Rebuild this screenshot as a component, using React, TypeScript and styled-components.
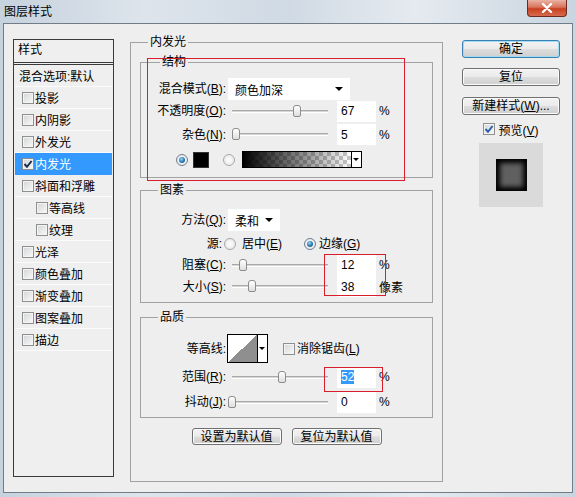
import styled, { createGlobalStyle } from "styled-components";

const GlobalStyle = createGlobalStyle`
  * { box-sizing: border-box; }
  html, body { margin: 0; padding: 0; }
  body {
    font-family: "Liberation Sans", "Noto Sans CJK SC", sans-serif;
    font-size: 12px;
    color: #000;
  }
`;

const CJK = `"Liberation Sans", "Noto Sans CJK SC", sans-serif`;

const Window = styled.div`
  width: 576px;
  height: 497px;
  display: flex;
  flex-direction: column;
  overflow: hidden;
  background: linear-gradient(
    90deg,
    #c6d2de 0%,
    #dde4ec 25%,
    #d0dae4 50%,
    #e5eaf0 72%,
    #c9d5e0 100%
  );
`;

const TitleBar = styled.div`
  height: 23px;
  flex-shrink: 0;
  display: flex;
  align-items: flex-start;
  padding-left: 4px;
`;

const Title = styled.div`
  font-family: ${CJK};
  font-size: 12px;
  line-height: 14px;
  margin-top: 5px;
`;

const CloseButton = styled.div`
  margin-left: auto;
  margin-right: 9px;
  width: 40px;
  height: 17px;
  border: 1px solid #6d2a1e;
  border-top: none;
  border-radius: 0 0 4px 4px;
  background: linear-gradient(#eab3a4 0%, #d9725a 45%, #c7401f 55%, #d76b4f 100%);
  display: flex;
  align-items: center;
  justify-content: center;
`;

const Client = styled.div`
  flex: 1;
  margin: 0 3px 4px;
  border: 1px solid #707c88;
  background: #eeeeee;
  display: flex;
  align-items: flex-start;
  position: relative;
`;

/* ---------- left style list ---------- */

const StyleList = styled.div`
  width: 101px;
  height: 438px;
  margin: 15px 0 0 9px;
  border: 1px solid #3a3a3a;
  background: #efefef;
  font-family: ${CJK};
`;

const ListHeader = styled.div`
  height: 25px;
  padding: 3px 0 0 4px;
  line-height: 15px;
  border-bottom: 3px double #3a3a3a;
`;

const ListItem = styled.div<{ $indent?: number; $selected?: boolean }>`
  height: 22px;
  display: flex;
  align-items: center;
  gap: 1px;
  padding-left: ${(p) => p.$indent ?? 7}px;
  margin: 0 1px;
  border-bottom: 1px solid ${(p) => (p.$selected ? "#3399ff" : "#fbfbfb")};
  background: ${(p) => (p.$selected ? "#3399ff" : "transparent")};
  color: ${(p) => (p.$selected ? "#fff" : "#000")};
  white-space: nowrap;
`;

/* ---------- common controls ---------- */

const CheckBox = styled.span<{ $ml?: number }>`
  width: 12px;
  height: 12px;
  flex-shrink: 0;
  margin-left: ${(p) => p.$ml ?? 0}px;
  border: 1px solid #8e8f8f;
  background: linear-gradient(135deg, #d3d5d8 0%, #f9f9f9 100%);
  box-shadow: inset 0 0 0 1px #f4f4f4;
  display: flex;
  align-items: center;
  justify-content: center;
`;

const Check = ({ on, ml, color = "#1e3a5c" }: { on?: boolean; ml?: number; color?: string }) => (
  <CheckBox $ml={ml}>
    {on && (
      <svg width="10" height="10" viewBox="0 0 10 10">
        <path d="M1.5 5 L4 7.8 L8.6 2" fill="none" stroke={color} strokeWidth="2" />
      </svg>
    )}
  </CheckBox>
);

const Radio = styled.span<{ $on?: boolean; $ml?: number }>`
  width: 12px;
  height: 12px;
  flex-shrink: 0;
  margin-left: ${(p) => p.$ml ?? 0}px;
  border-radius: 50%;
  border: 1px solid ${(p) => (p.$on ? "#6d7f92" : "#a8a8a8")};
  background: radial-gradient(circle at 50% 50%, #ffffff 0%, #e2e2e2 100%);
  position: relative;

  &::after {
    content: "";
    display: ${(p) => (p.$on ? "block" : "none")};
    position: absolute;
    left: 2px;
    top: 2px;
    width: 6px;
    height: 6px;
    border-radius: 50%;
    background: radial-gradient(circle at 40% 35%, #9fd6f5 0%, #2d7fb8 50%, #114a78 100%);
  }
`;

const Key = styled.span`
  text-decoration: underline;
`;

const Text = styled.span<{ $ml?: number }>`
  margin-left: ${(p) => p.$ml ?? 0}px;
  font-family: ${CJK};
  white-space: nowrap;
  line-height: 14px;
`;

/* ---------- group boxes ---------- */

const Group = styled.fieldset<{ $pad: string; $mt?: number; $h?: number }>`
  margin: ${(p) => p.$mt ?? 0}px 0 0;
  padding: ${(p) => p.$pad};
  border: 1px solid #a2a2a2;
  min-width: 0;
  height: ${(p) => (p.$h ? `${p.$h}px` : "auto")};
`;

const Legend = styled.legend<{ $offset: number }>`
  margin-left: ${(p) => p.$offset}px;
  padding: 0 2px;
  height: 14px;
  line-height: 14px;
  font-family: ${CJK};
  font-size: 12px;
`;

const Row = styled.div<{ $h: number; $pl?: number }>`
  height: ${(p) => p.$h}px;
  display: flex;
  align-items: center;
  padding-left: ${(p) => p.$pl ?? 0}px;
`;

const Label = styled.span<{ $w?: number }>`
  width: ${(p) => p.$w ?? 76}px;
  flex-shrink: 0;
  text-align: right;
  white-space: nowrap;
  line-height: 14px;
  font-family: ${CJK};
`;

const Select = styled.div<{ $w: number }>`
  width: ${(p) => p.$w}px;
  height: 22px;
  margin-left: 2px;
  background: #fff;
  display: flex;
  align-items: center;
  padding-left: 7px;
  font-family: ${CJK};
  position: relative;

  &::after {
    content: "";
    position: absolute;
    right: 7px;
    top: 9px;
    border-left: 4px solid transparent;
    border-right: 4px solid transparent;
    border-top: 4px solid #000;
  }
`;

const Track = styled.div`
  width: 96px;
  height: 3px;
  margin-left: 6px;
  flex-shrink: 0;
  border-top: 1px solid #a9a9a9;
  border-bottom: 1px solid #ffffff;
  background: #d6d6d6;
  position: relative;
`;

const Thumb = styled.div<{ $pos: number }>`
  position: absolute;
  top: -6px;
  left: ${(p) => Math.round(p.$pos * 96) - 4}px;
  width: 8px;
  height: 12px;
  border: 1px solid #8c8c8c;
  border-radius: 3px 3px 2px 2px;
  background: linear-gradient(#ffffff, #dedede);
`;

const Slider = ({ pos }: { pos: number }) => (
  <Track>
    <Thumb $pos={pos} />
  </Track>
);

const NumBox = styled.div`
  width: 39px;
  height: 21px;
  margin-left: 9px;
  flex-shrink: 0;
  background: #fff;
  padding-left: 4px;
  display: flex;
  align-items: center;
`;

const Selected = styled.span`
  background: #3399ff;
  color: #fff;
`;

const Unit = styled.span`
  margin-left: 3px;
  font-family: ${CJK};
  white-space: nowrap;
`;

const Swatch = styled.div`
  width: 16px;
  height: 16px;
  margin-left: 5px;
  background: #000;
  border: 1px solid #333;
`;

const GradientPicker = styled.div`
  width: 120px;
  height: 17px;
  margin-left: 7px;
  border: 1px solid #000;
  display: flex;
  background: #fff;
`;

const GradientStrip = styled.div`
  flex: 1;
  background-image: linear-gradient(90deg, #000 0%, rgba(0, 0, 0, 0) 100%),
    repeating-conic-gradient(#c8c8c8 0 25%, #ffffff 0 50%);
  background-size: 100% 100%, 8px 8px;
`;

const PickerArrow = styled.div`
  width: 10px;
  border-left: 1px solid #000;
  position: relative;

  &::after {
    content: "";
    position: absolute;
    left: 1px;
    top: 6px;
    border-left: 3px solid transparent;
    border-right: 3px solid transparent;
    border-top: 3px solid #000;
  }
`;

const Contour = styled.div`
  width: 41px;
  height: 29px;
  margin-left: 1px;
  border: 1px solid #000;
  display: flex;
  background: #fff;
`;

const ContourGraph = styled.div`
  flex: 1;
  background: linear-gradient(to top left, #8f8f8f 50%, #ffffff 50%);
`;

const ContourArrow = styled(PickerArrow)`
  &::after {
    top: 12px;
  }
`;

const Button = styled.div<{ $w: number; $h: number; $mt?: number; $default?: boolean }>`
  width: ${(p) => p.$w}px;
  height: ${(p) => p.$h}px;
  margin-top: ${(p) => p.$mt ?? 0}px;
  flex-shrink: 0;
  border: 1px solid ${(p) => (p.$default ? "#3c7fb1" : "#707070")};
  border-radius: 3px;
  background: linear-gradient(#f2f2f2 0%, #ebebeb 48%, #dddddd 52%, #cfcfcf 100%);
  box-shadow: ${(p) => (p.$default ? "inset 0 0 0 1px #9fdcf5" : "inset 0 0 0 1px #fbfbfb")};
  display: flex;
  align-items: center;
  justify-content: center;
  font-family: ${CJK};
  white-space: nowrap;
  line-height: 14px;
`;

/* ---------- main panel ---------- */

const MainGroup = styled(Group)`
  width: 313px;
  margin: 11px 0 0 16px;
`;

const ButtonRow = styled.div`
  display: flex;
  justify-content: center;
  gap: 10px;
  margin-top: 10px;
`;

/* ---------- right column ---------- */

const SideColumn = styled.div`
  width: 98px;
  margin: 16px 0 0 19px;
  display: flex;
  flex-direction: column;
  align-items: center;
`;

const PreviewToggle = styled.div`
  height: 16px;
  margin-top: 6px;
  display: flex;
  align-items: center;
  gap: 3px;
  font-family: ${CJK};
`;

const Preview = styled.div`
  width: 64px;
  height: 64px;
  margin-top: 6px;
  background: #dadada;
  display: flex;
  align-items: center;
  justify-content: center;
`;

const PreviewSquare = styled.div`
  width: 31px;
  height: 32px;
  background: #606060;
  box-shadow: inset 0 0 5px 4px #000;
`;

/* annotation boxes drawn on top of the dialog */
const Marker = styled.div<{ $x: number; $y: number; $w: number; $h: number }>`
  position: absolute;
  left: ${(p) => p.$x}px;
  top: ${(p) => p.$y}px;
  width: ${(p) => p.$w}px;
  height: ${(p) => p.$h}px;
  border: 1px solid #d81e2c;
  pointer-events: none;
`;

const listItems: { name: string; indent?: number; on?: boolean }[] = [
  { name: "投影" },
  { name: "内阴影" },
  { name: "外发光" },
  { name: "内发光", on: true },
  { name: "斜面和浮雕" },
  { name: "等高线", indent: 21 },
  { name: "纹理", indent: 21 },
  { name: "光泽" },
  { name: "颜色叠加" },
  { name: "渐变叠加" },
  { name: "图案叠加" },
  { name: "描边" },
];

export default function App() {
  return (
    <>
      <GlobalStyle />
      <Window>
        <TitleBar>
          <Title>图层样式</Title>
          <CloseButton>
            <svg width="12" height="10" viewBox="0 0 12 10">
              <path d="M2 1 L10 9 M10 1 L2 9" stroke="#fff" strokeWidth="2.4" strokeLinecap="round" />
            </svg>
          </CloseButton>
        </TitleBar>

        <Client>
          <StyleList>
            <ListHeader>样式</ListHeader>
            <ListItem $indent={4}>混合选项:默认</ListItem>
            {listItems.map((it) => (
              <ListItem key={it.name} $indent={it.indent} $selected={it.on}>
                <Check on={it.on} color="#1a2f4a" />
                {it.name}
              </ListItem>
            ))}
          </StyleList>

          <MainGroup $pad="6px 9px 0 9px" $h={447}>
            <Legend $offset={8}>内发光</Legend>

            <Group $pad="9px 9px 5px 9px">
              <Legend $offset={10}>结构</Legend>
              <Row $h={22}>
                <Label>
                  混合模式(<Key>B</Key>):
                </Label>
                <Select $w={122}>颜色加深</Select>
              </Row>
              <Row $h={22}>
                <Label>
                  不透明度(<Key>O</Key>):
                </Label>
                <Slider pos={0.677} />
                <NumBox>67</NumBox>
                <Unit>%</Unit>
              </Row>
              <Row $h={25}>
                <Label>
                  杂色(<Key>N</Key>):
                </Label>
                <Slider pos={0.045} />
                <NumBox>5</NumBox>
                <Unit>%</Unit>
              </Row>
              <Row $h={25} $pl={26}>
                <Radio $on />
                <Swatch />
                <Radio $ml={14} />
                <GradientPicker>
                  <GradientStrip />
                  <PickerArrow />
                </GradientPicker>
              </Row>
            </Group>

            <Group $pad="11px 9px 4px 9px" $mt={5}>
              <Legend $offset={8}>图素</Legend>
              <Row $h={24}>
                <Label>
                  方法(<Key>Q</Key>):
                </Label>
                <Select $w={52}>柔和</Select>
              </Row>
              <Row $h={23}>
                <Label $w={72}>源:</Label>
                <Radio $ml={2} />
                <Text $ml={6}>
                  居中(<Key>E</Key>)
                </Text>
                <Radio $on $ml={22} />
                <Text $ml={3}>
                  边缘(<Key>G</Key>)
                </Text>
              </Row>
              <Row $h={20}>
                <Label>
                  阻塞(<Key>C</Key>):
                </Label>
                <Slider pos={0.115} />
                <NumBox>12</NumBox>
                <Unit>%</Unit>
              </Row>
              <Row $h={23}>
                <Label>
                  大小(<Key>S</Key>):
                </Label>
                <Slider pos={0.208} />
                <NumBox>38</NumBox>
                <Unit>像素</Unit>
              </Row>
            </Group>

            <Group $pad="9px 9px 3px 9px" $mt={7}>
              <Legend $offset={8}>品质</Legend>
              <Row $h={31}>
                <Label>等高线:</Label>
                <Contour>
                  <ContourGraph />
                  <ContourArrow />
                </Contour>
                <Check ml={15} />
                <Text $ml={2}>
                  消除锯齿(<Key>L</Key>)
                </Text>
              </Row>
              <Row $h={26}>
                <Label>
                  范围(<Key>R</Key>):
                </Label>
                <Slider pos={0.52} />
                <NumBox>
                  <Selected>52</Selected>
                </NumBox>
                <Unit>%</Unit>
              </Row>
              <Row $h={24}>
                <Label>
                  抖动(<Key>J</Key>):
                </Label>
                <Slider pos={0} />
                <NumBox>0</NumBox>
                <Unit>%</Unit>
              </Row>
            </Group>

            <ButtonRow>
              <Button $w={90} $h={17}>设置为默认值</Button>
              <Button $w={90} $h={17}>复位为默认值</Button>
            </ButtonRow>
          </MainGroup>

          <SideColumn>
            <Button $w={98} $h={18} $default>
              确定
            </Button>
            <Button $w={98} $h={18} $mt={10}>
              复位
            </Button>
            <Button $w={98} $h={18} $mt={11}>
              新建样式(<Key>W</Key>)...
            </Button>
            <PreviewToggle>
              <Check on color="#2a5fa8" />
              <span>
                预览(<Key>V</Key>)
              </span>
            </PreviewToggle>
            <Preview>
              <PreviewSquare />
            </Preview>
          </SideColumn>

          <Marker $x={143} $y={34} $w={258} $h={123} />
          <Marker $x={320} $y={230} $w={62} $h={42} />
          <Marker $x={320} $y={343} $w={59} $h={25} />
        </Client>
      </Window>
    </>
  );
}
